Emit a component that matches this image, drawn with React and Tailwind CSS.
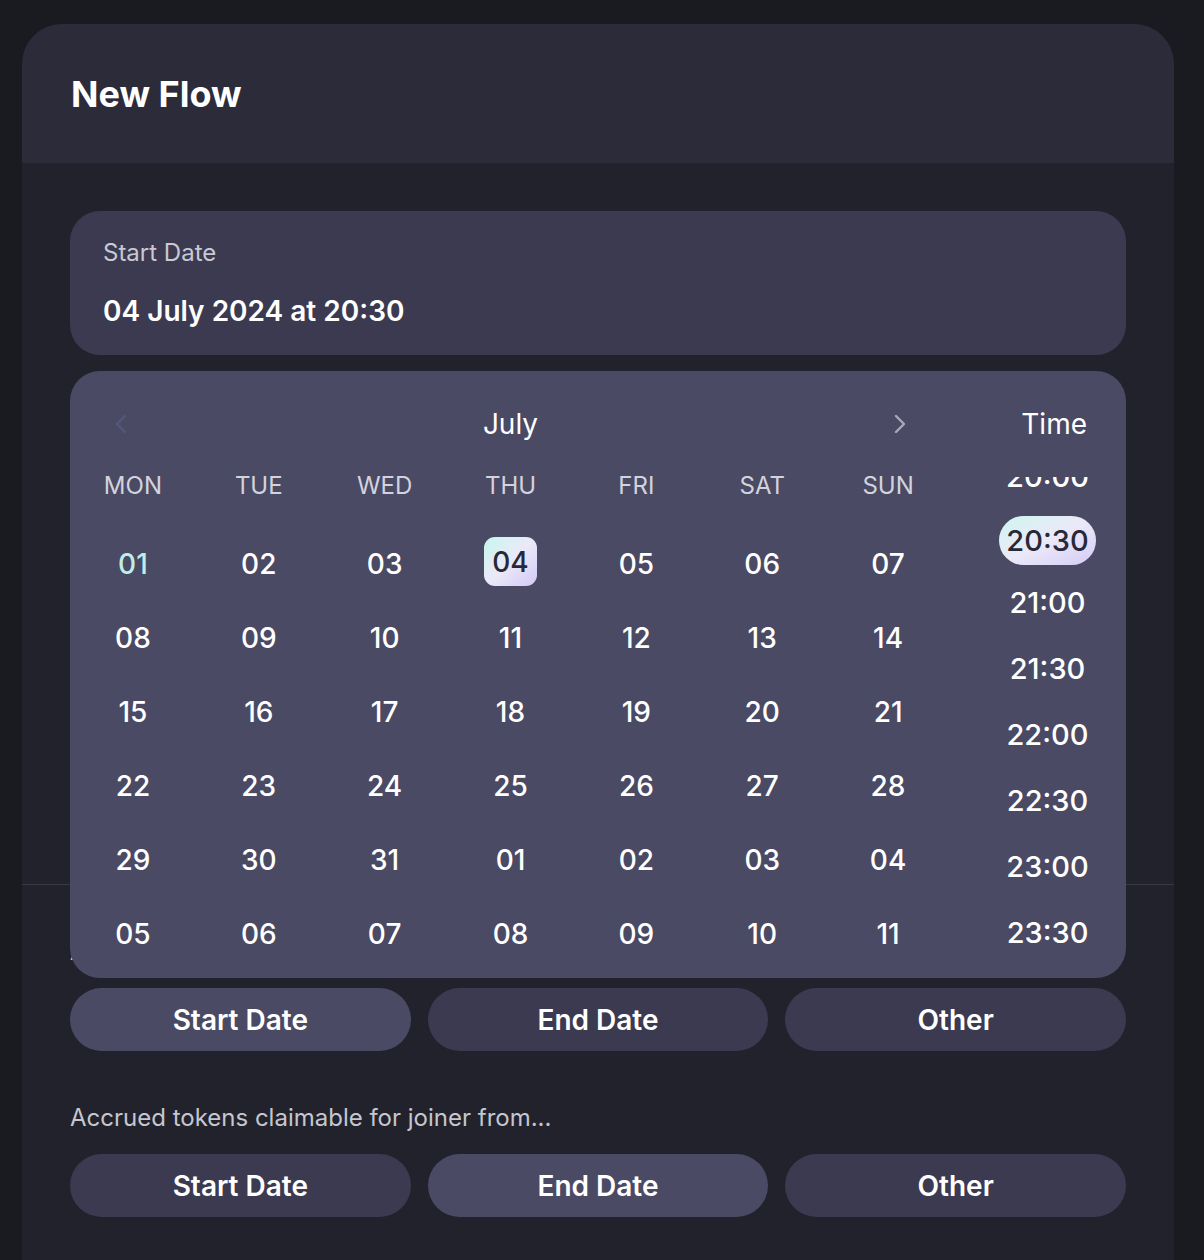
import React from "react";

const weekdays = ["MON", "TUE", "WED", "THU", "FRI", "SAT", "SUN"];
const weeks = [
  ["01", "02", "03", "04", "05", "06", "07"],
  ["08", "09", "10", "11", "12", "13", "14"],
  ["15", "16", "17", "18", "19", "20", "21"],
  ["22", "23", "24", "25", "26", "27", "28"],
  ["29", "30", "31", "01", "02", "03", "04"],
  ["05", "06", "07", "08", "09", "10", "11"],
];
const laterTimes = ["21:30", "22:00", "22:30", "23:00", "23:30"];

function Chevron({ dir, className }) {
  return (
    <svg width="14" height="20" viewBox="0 0 14 20" fill="none" className={className}>
      {dir === "left" ? (
        <polyline points="11,2 3,10 11,18" stroke="currentColor" strokeWidth="2.4" strokeLinecap="round" strokeLinejoin="round" />
      ) : (
        <polyline points="3,2 11,10 3,18" stroke="currentColor" strokeWidth="2.4" strokeLinecap="round" strokeLinejoin="round" />
      )}
    </svg>
  );
}

function DayCell({ value, wi, di }) {
  const selected = wi === 0 && di === 3;
  const today = wi === 0 && di === 0;
  if (selected) {
    return (
      <div className="flex h-[74px] items-center justify-center">
        <div className="mb-[5px] flex h-[49px] w-[53px] items-center justify-center rounded-[11px] bg-linear-to-br from-[#c4f7ee] via-[#ebe9f8] to-[#d3c9f6] text-[28px] font-medium text-[#272838]">
          {value}
        </div>
      </div>
    );
  }
  return (
    <div className="flex h-[74px] items-center justify-center">
      <span className={`text-[28px] font-medium ${today ? "text-[#bfeee6]" : "text-white"}`}>{value}</span>
    </div>
  );
}

function Calendar() {
  return (
    <div className="absolute left-0 right-0 top-[160px] z-10 flex h-[607px] rounded-[30px] bg-[#4a4a64] pr-[30px] pt-[28px]">
      <div className="w-[881px]">
        <div className="flex h-[50px] items-center pl-[44px] pr-[44px]">
          <Chevron dir="left" className="text-[#55567a]" />
          <div className="flex-1 text-center text-[28px] leading-none text-white">July</div>
          <Chevron dir="right" className="text-[#a9a9bb]" />
        </div>
        <div className="mt-[12px] grid h-[50px] grid-cols-7 items-center">
          {weekdays.map((d) => (
            <div key={d} className="text-center text-[24px] text-[#d3d3de]">
              {d}
            </div>
          ))}
        </div>
        <div className="mt-[16px] grid grid-cols-7">
          {weeks.map((w, wi) => w.map((v, di) => <DayCell key={`${wi}-${di}`} value={v} wi={wi} di={di} />))}
        </div>
      </div>
      <div className="ml-[48px] flex w-[97px] flex-col">
        <div className="flex h-[50px] items-center justify-end pr-[9px] text-[28px] leading-none text-white">Time</div>
        <div className="mt-[28px] h-[489px] overflow-hidden">
          <div className="-mt-[20px] flex h-[40px] items-center justify-center text-[29px] font-medium text-white">20:00</div>
          <div className="mt-[19px] flex h-[49px] items-center justify-center rounded-full bg-linear-to-br from-[#cdf5f0] via-[#ebe9f8] to-[#d5cbf6] text-[29px] font-medium text-[#272838]">
            20:30
          </div>
          <div className="mt-[5px] flex h-[66px] items-center justify-center text-[29px] font-medium text-white">21:00</div>
          {laterTimes.map((t) => (
            <div key={t} className="flex h-[66px] items-center justify-center text-[29px] font-medium text-white">
              {t}
            </div>
          ))}
        </div>
      </div>
    </div>
  );
}

function Choice({ options, active, label }) {
  return (
    <div>
      <div className="h-[28px] text-[24px] leading-[28px] text-[#c6c6cf]">{label}</div>
      <div className="mt-[22px] grid grid-cols-3 gap-[17px]">
        {options.map((o, i) => (
          <button
            key={o}
            className={`flex h-[63px] items-center justify-center rounded-full text-[28px] font-semibold text-white ${
              i === active ? "bg-[#4a4a64]" : "bg-[#3b3a50]"
            }`}
          >
            {o}
          </button>
        ))}
      </div>
    </div>
  );
}

export default function App() {
  return (
    <div className="h-[1260px] overflow-hidden bg-[#1a1a21] pt-[24px] font-[Inter,sans-serif]">
      <div className="ml-[22px] w-[1152px] overflow-hidden rounded-t-[40px] bg-[#22222c] pb-[80px]">
        <div className="flex h-[139px] items-center bg-[#2c2b3a] pl-[49px]">
          <h1 className="text-[36px] font-bold leading-none text-white">New Flow</h1>
        </div>
        <div className="px-[48px] pt-[48px] pb-[529px]">
          <div className="relative">
            <div className="h-[144px] rounded-[30px] bg-[#3b3a50] px-[33px] pt-[28px]">
              <div className="text-[24px] leading-[28px] text-[#c9c9d3]">Start Date</div>
              <div className="mt-[26px] text-[28px] font-semibold leading-[36px] text-white">04 July 2024 at 20:30</div>
            </div>
            <Calendar />
          </div>
        </div>
        <div className="h-px bg-[#393946]" />
        <div className="flex flex-col gap-[53px] px-[48px] pt-[53px]">
          <Choice label="Accrued tokens claimable for sender from..." options={["Start Date", "End Date", "Other"]} active={0} />
          <Choice label="Accrued tokens claimable for joiner from..." options={["Start Date", "End Date", "Other"]} active={1} />
        </div>
      </div>
    </div>
  );
}
